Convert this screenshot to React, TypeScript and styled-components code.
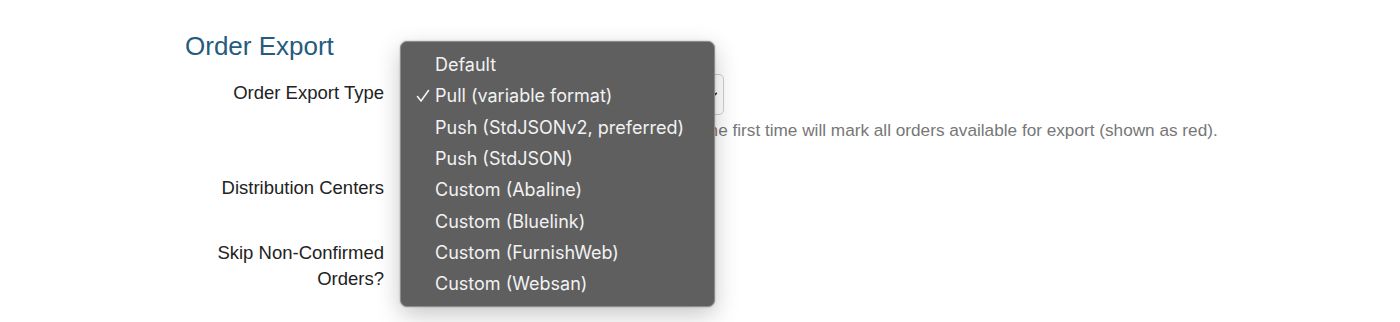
import React from "react";
import styled, { createGlobalStyle } from "styled-components";

const options = [
  "Default",
  "Pull (variable format)",
  "Push (StdJSONv2, preferred)",
  "Push (StdJSON)",
  "Custom (Abaline)",
  "Custom (Bluelink)",
  "Custom (FurnishWeb)",
  "Custom (Websan)",
];

const selected = "Pull (variable format)";

const App = () => {
  return (
    <Page>
      <GlobalStyle />
      <Section>
        <Heading>Order Export</Heading>
        <Form>
          <Label>Order Export Type</Label>
          <Field>
            <SelectBox>
              <SelectValue>{selected}</SelectValue>
              <Chevron viewBox="0 0 10 10">
                <path d="M2 3.5 L5 6.5 L8 3.5" />
              </Chevron>
            </SelectBox>
            <Help>Setting the order export type to Pull, for the first time will mark all orders available for export (shown as red).</Help>
          </Field>

          <Label>Distribution Centers</Label>
          <Field />

          <Label>
            Skip Non-Confirmed
            <br />
            Orders?
          </Label>
          <Field />
        </Form>

        <Menu>
          {options.map((o) => (
            <Item key={o}>
              <Check>
                {o === selected && (
                  <svg viewBox="0 0 14 14" width="14" height="14">
                    <path d="M1.5 7.5 L5 12 L12.5 1.5" />
                  </svg>
                )}
              </Check>
              {o}
            </Item>
          ))}
        </Menu>
      </Section>
    </Page>
  );
};

export default App;

const GlobalStyle = createGlobalStyle`
  html, body { margin: 0; padding: 0; background: #fff; }
  body { font-family: "Liberation Sans", Arial, sans-serif; color: #222; }
`;

const Page = styled.div`
  width: 1400px;
  height: 322px;
  overflow: hidden;
`;

const Section = styled.div`
  position: relative;
  padding: 31px 0 0 185px;
`;

const Heading = styled.h2`
  margin: 0 0 13px;
  font-size: 26px;
  font-weight: 400;
  line-height: 30px;
  color: #255b7c;
`;

const Form = styled.div`
  display: grid;
  grid-template-columns: 199px 1fr;
  grid-template-rows: 95px 65px auto;
  column-gap: 16px;
`;

const Label = styled.div`
  text-align: right;
  font-size: 18.5px;
  line-height: 26px;
  color: #222;
  padding-top: 6px;
`;

const Field = styled.div`
  display: flex;
  flex-direction: column;
`;

const SelectBox = styled.div`
  box-sizing: border-box;
  width: 324px;
  height: 41px;
  border: 1px solid #cfcfcf;
  border-radius: 5px;
  display: flex;
  align-items: center;
  justify-content: space-between;
  padding: 0 4px 0 12px;
  font-size: 16px;
`;

const SelectValue = styled.span`
  color: #333;
`;

const Chevron = styled.svg`
  width: 11px;
  height: 11px;
  fill: none;
  stroke: #333;
  stroke-width: 1.4;
`;

const Help = styled.div`
  margin-top: 4px;
  font-size: 17.2px;
  line-height: 22px;
  color: #777;
  white-space: nowrap;
`;

const Menu = styled.div`
  position: absolute;
  left: 400px;
  top: 41px;
  box-sizing: border-box;
  width: 315px;
  padding: 7px 0;
  background: #5f5f5f;
  border: 1px solid #8c8c8c;
  border-radius: 7px;
  box-shadow: 0 8px 24px rgba(0, 0, 0, 0.22), 0 0 2px rgba(0, 0, 0, 0.3);
`;

const Item = styled.div`
  display: flex;
  align-items: center;
  height: 31.3px;
  padding-left: 15px;
  font-family: Inter, "Liberation Sans", sans-serif;
  font-size: 18px;
  color: #f2f2f2;
  white-space: nowrap;
`;

const Check = styled.span`
  display: inline-flex;
  align-items: center;
  width: 19px;
  height: 14px;

  svg {
    fill: none;
    stroke: #f2f2f2;
    stroke-width: 1.6;
    stroke-linecap: round;
    stroke-linejoin: round;
  }
`;
